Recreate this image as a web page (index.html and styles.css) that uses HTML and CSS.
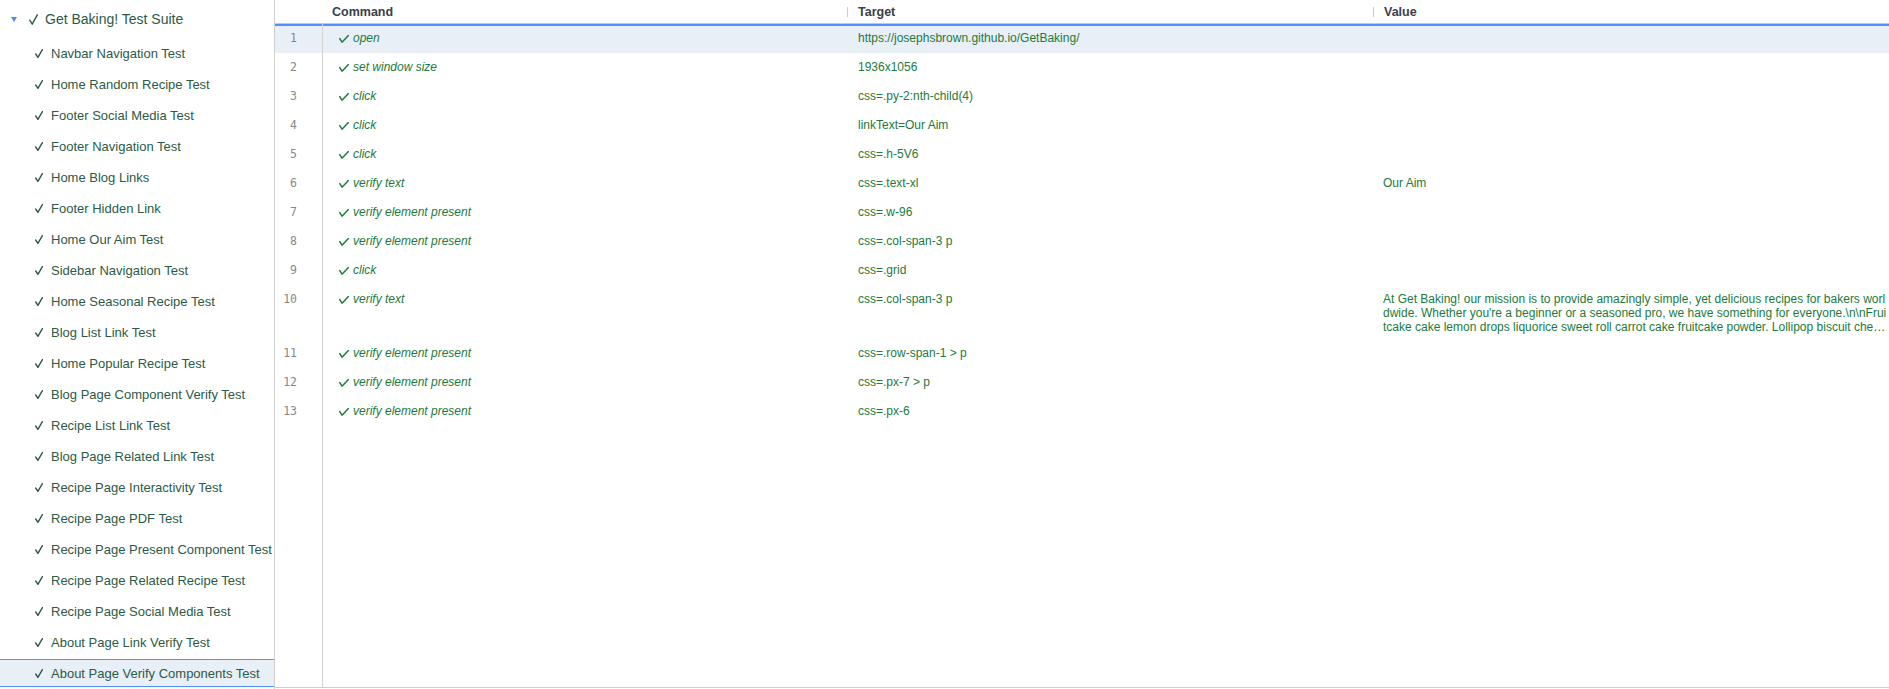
FILE: index.html
```html
<!DOCTYPE html>
<html lang="en">
<head>
<meta charset="utf-8">
<title>Get Baking! Test Suite</title>
<link rel="stylesheet" href="styles.css">
</head>
<body>
<div class="app">
  <aside class="sidebar">
    <div class="suite">
      <span class="caret"></span>
      <svg class="chk chk-suite" viewBox="0 0 9 11" width="9" height="11"><path d="M0.8 6.2 L3.2 10.2 L8.3 0.8"/></svg>
      <span>Get Baking! Test Suite</span>
    </div>
    <ul class="tests">
      <li class="test"><svg class="chk" viewBox="0 0 8 9" width="8" height="9"><path d="M0.7 5 L2.9 8.4 L7.4 0.6"/></svg>Navbar Navigation Test</li>
      <li class="test"><svg class="chk" viewBox="0 0 8 9" width="8" height="9"><path d="M0.7 5 L2.9 8.4 L7.4 0.6"/></svg>Home Random Recipe Test</li>
      <li class="test"><svg class="chk" viewBox="0 0 8 9" width="8" height="9"><path d="M0.7 5 L2.9 8.4 L7.4 0.6"/></svg>Footer Social Media Test</li>
      <li class="test"><svg class="chk" viewBox="0 0 8 9" width="8" height="9"><path d="M0.7 5 L2.9 8.4 L7.4 0.6"/></svg>Footer Navigation Test</li>
      <li class="test"><svg class="chk" viewBox="0 0 8 9" width="8" height="9"><path d="M0.7 5 L2.9 8.4 L7.4 0.6"/></svg>Home Blog Links</li>
      <li class="test"><svg class="chk" viewBox="0 0 8 9" width="8" height="9"><path d="M0.7 5 L2.9 8.4 L7.4 0.6"/></svg>Footer Hidden Link</li>
      <li class="test"><svg class="chk" viewBox="0 0 8 9" width="8" height="9"><path d="M0.7 5 L2.9 8.4 L7.4 0.6"/></svg>Home Our Aim Test</li>
      <li class="test"><svg class="chk" viewBox="0 0 8 9" width="8" height="9"><path d="M0.7 5 L2.9 8.4 L7.4 0.6"/></svg>Sidebar Navigation Test</li>
      <li class="test"><svg class="chk" viewBox="0 0 8 9" width="8" height="9"><path d="M0.7 5 L2.9 8.4 L7.4 0.6"/></svg>Home Seasonal Recipe Test</li>
      <li class="test"><svg class="chk" viewBox="0 0 8 9" width="8" height="9"><path d="M0.7 5 L2.9 8.4 L7.4 0.6"/></svg>Blog List Link Test</li>
      <li class="test"><svg class="chk" viewBox="0 0 8 9" width="8" height="9"><path d="M0.7 5 L2.9 8.4 L7.4 0.6"/></svg>Home Popular Recipe Test</li>
      <li class="test"><svg class="chk" viewBox="0 0 8 9" width="8" height="9"><path d="M0.7 5 L2.9 8.4 L7.4 0.6"/></svg>Blog Page Component Verify Test</li>
      <li class="test"><svg class="chk" viewBox="0 0 8 9" width="8" height="9"><path d="M0.7 5 L2.9 8.4 L7.4 0.6"/></svg>Recipe List Link Test</li>
      <li class="test"><svg class="chk" viewBox="0 0 8 9" width="8" height="9"><path d="M0.7 5 L2.9 8.4 L7.4 0.6"/></svg>Blog Page Related Link Test</li>
      <li class="test"><svg class="chk" viewBox="0 0 8 9" width="8" height="9"><path d="M0.7 5 L2.9 8.4 L7.4 0.6"/></svg>Recipe Page Interactivity Test</li>
      <li class="test"><svg class="chk" viewBox="0 0 8 9" width="8" height="9"><path d="M0.7 5 L2.9 8.4 L7.4 0.6"/></svg>Recipe Page PDF Test</li>
      <li class="test"><svg class="chk" viewBox="0 0 8 9" width="8" height="9"><path d="M0.7 5 L2.9 8.4 L7.4 0.6"/></svg>Recipe Page Present Component Test</li>
      <li class="test"><svg class="chk" viewBox="0 0 8 9" width="8" height="9"><path d="M0.7 5 L2.9 8.4 L7.4 0.6"/></svg>Recipe Page Related Recipe Test</li>
      <li class="test"><svg class="chk" viewBox="0 0 8 9" width="8" height="9"><path d="M0.7 5 L2.9 8.4 L7.4 0.6"/></svg>Recipe Page Social Media Test</li>
      <li class="test"><svg class="chk" viewBox="0 0 8 9" width="8" height="9"><path d="M0.7 5 L2.9 8.4 L7.4 0.6"/></svg>About Page Link Verify Test</li>
      <li class="test selected"><svg class="chk" viewBox="0 0 8 9" width="8" height="9"><path d="M0.7 5 L2.9 8.4 L7.4 0.6"/></svg>About Page Verify Components Test</li>
    </ul>
  </aside>

  <main class="editor">
    <div class="thead">
      <div class="th th-num"></div>
      <div class="th th-cmd">Command</div>
      <div class="th"><span class="sep"></span>Target</div>
      <div class="th"><span class="sep"></span>Value</div>
    </div>
    <div class="tbody">
      <div class="row current">
        <div class="num">1</div>
        <div class="cmd"><svg class="cchk" viewBox="0 0 10 8" width="10" height="8"><path d="M0.8 3.6 L3 7.2 L9.4 0.6"/></svg>open</div>
        <div class="target">https://josephsbrown.github.io/GetBaking/</div>
        <div class="value"></div>
      </div>
      <div class="row">
        <div class="num">2</div>
        <div class="cmd"><svg class="cchk" viewBox="0 0 10 8" width="10" height="8"><path d="M0.8 3.6 L3 7.2 L9.4 0.6"/></svg>set window size</div>
        <div class="target">1936x1056</div>
        <div class="value"></div>
      </div>
      <div class="row">
        <div class="num">3</div>
        <div class="cmd"><svg class="cchk" viewBox="0 0 10 8" width="10" height="8"><path d="M0.8 3.6 L3 7.2 L9.4 0.6"/></svg>click</div>
        <div class="target">css=.py-2:nth-child(4)</div>
        <div class="value"></div>
      </div>
      <div class="row">
        <div class="num">4</div>
        <div class="cmd"><svg class="cchk" viewBox="0 0 10 8" width="10" height="8"><path d="M0.8 3.6 L3 7.2 L9.4 0.6"/></svg>click</div>
        <div class="target">linkText=Our Aim</div>
        <div class="value"></div>
      </div>
      <div class="row">
        <div class="num">5</div>
        <div class="cmd"><svg class="cchk" viewBox="0 0 10 8" width="10" height="8"><path d="M0.8 3.6 L3 7.2 L9.4 0.6"/></svg>click</div>
        <div class="target">css=.h-5V6</div>
        <div class="value"></div>
      </div>
      <div class="row">
        <div class="num">6</div>
        <div class="cmd"><svg class="cchk" viewBox="0 0 10 8" width="10" height="8"><path d="M0.8 3.6 L3 7.2 L9.4 0.6"/></svg>verify text</div>
        <div class="target">css=.text-xl</div>
        <div class="value">Our Aim</div>
      </div>
      <div class="row">
        <div class="num">7</div>
        <div class="cmd"><svg class="cchk" viewBox="0 0 10 8" width="10" height="8"><path d="M0.8 3.6 L3 7.2 L9.4 0.6"/></svg>verify element present</div>
        <div class="target">css=.w-96</div>
        <div class="value"></div>
      </div>
      <div class="row">
        <div class="num">8</div>
        <div class="cmd"><svg class="cchk" viewBox="0 0 10 8" width="10" height="8"><path d="M0.8 3.6 L3 7.2 L9.4 0.6"/></svg>verify element present</div>
        <div class="target">css=.col-span-3 p</div>
        <div class="value"></div>
      </div>
      <div class="row">
        <div class="num">9</div>
        <div class="cmd"><svg class="cchk" viewBox="0 0 10 8" width="10" height="8"><path d="M0.8 3.6 L3 7.2 L9.4 0.6"/></svg>click</div>
        <div class="target">css=.grid</div>
        <div class="value"></div>
      </div>
      <div class="row">
        <div class="num">10</div>
        <div class="cmd"><svg class="cchk" viewBox="0 0 10 8" width="10" height="8"><path d="M0.8 3.6 L3 7.2 L9.4 0.6"/></svg>verify text</div>
        <div class="target">css=.col-span-3 p</div>
        <div class="value long">At Get Baking! our mission is to provide amazingly simple, yet delicious recipes for bakers worldwide. Whether you're a beginner or a seasoned pro, we have something for everyone.\n\nFruitcake cake lemon drops liquorice sweet roll carrot cake fruitcake powder. Lollipop biscuit che…</div>
      </div>
      <div class="row">
        <div class="num">11</div>
        <div class="cmd"><svg class="cchk" viewBox="0 0 10 8" width="10" height="8"><path d="M0.8 3.6 L3 7.2 L9.4 0.6"/></svg>verify element present</div>
        <div class="target">css=.row-span-1 &gt; p</div>
        <div class="value"></div>
      </div>
      <div class="row">
        <div class="num">12</div>
        <div class="cmd"><svg class="cchk" viewBox="0 0 10 8" width="10" height="8"><path d="M0.8 3.6 L3 7.2 L9.4 0.6"/></svg>verify element present</div>
        <div class="target">css=.px-7 &gt; p</div>
        <div class="value"></div>
      </div>
      <div class="row">
        <div class="num">13</div>
        <div class="cmd"><svg class="cchk" viewBox="0 0 10 8" width="10" height="8"><path d="M0.8 3.6 L3 7.2 L9.4 0.6"/></svg>verify element present</div>
        <div class="target">css=.px-6</div>
        <div class="value"></div>
      </div>
      <div class="row filler">
        <div class="num"></div>
        <div></div>
        <div></div>
        <div></div>
      </div>
    </div>
  </main>
</div>
</body>
</html>
```

FILE: styles.css
```css
* {
  box-sizing: border-box;
}

html, body {
  margin: 0;
  padding: 0;
  background: #ffffff;
}

body {
  font-family: "Liberation Sans", Arial, sans-serif;
  font-size: 12px;
  color: #333;
}

.app {
  display: flex;
  height: 689px;
  overflow: hidden;
}

/* ---------- sidebar ---------- */
.sidebar {
  width: 275px;
  flex: none;
  border-right: 1px solid #cfcfcf;
  padding-top: 5px;
  overflow: hidden;
}

.suite {
  display: flex;
  align-items: center;
  height: 28px;
  padding-left: 11px;
  font-size: 14px;
  color: #2c5a46;
  white-space: nowrap;
}

.caret {
  width: 0;
  height: 0;
  border-left: 3.5px solid transparent;
  border-right: 3.5px solid transparent;
  border-top: 5px solid #4a90e2;
  margin-right: 12px;
}

.chk {
  flex: none;
  fill: none;
  stroke: #2c5a46;
  stroke-width: 1.4;
  stroke-linecap: round;
  stroke-linejoin: round;
  margin-right: 8px;
}

.chk-suite {
  margin-right: 7px;
}

.tests {
  list-style: none;
  margin: 6px 0 0;
  padding: 0;
  display: flex;
  flex-direction: column;
  gap: 3px;
}

.test {
  display: flex;
  align-items: center;
  height: 28px;
  padding-left: 35px;
  font-size: 13px;
  color: #2c5a46;
  white-space: nowrap;
}

.test.selected {
  background: #e8eff7;
  box-shadow: inset 0 1px 0 #4d90fe, inset 0 -1px 0 #4d90fe;
}

/* ---------- editor table ---------- */
.editor {
  flex: 1;
  min-width: 0;
  height: 688px;
  border-bottom: 1px solid #cfcfcf;
  display: flex;
  flex-direction: column;
}

.thead,
.row {
  display: grid;
  grid-template-columns: 48px 524px 526px 1fr;
}

.thead {
  height: 24px;
  border-bottom: 1px solid #c8c8c8;
  flex: none;
}

.th {
  display: flex;
  align-items: center;
  font-size: 12.5px;
  font-weight: bold;
  color: #3b404c;
  white-space: nowrap;
}

.th-cmd {
  padding-left: 9px;
}

.sep {
  width: 1px;
  height: 10px;
  background: #cccccc;
  margin-right: 10px;
}

.tbody {
  flex: 1;
  display: flex;
  flex-direction: column;
}

.row {
  min-height: 29px;
  flex: none;
  color: #1c7a3c;
  line-height: 14px;
}

.row > div {
  padding: 7px 0 5px;
}

.row.current {
  background: #e8eff7;
  box-shadow: inset 0 2px 0 #4d90fe;
}

.row.filler {
  flex: 1;
}

.num {
  border-right: 1px solid #d3d3d3;
  text-align: right;
  padding-right: 25px !important;
  font-family: "DejaVu Sans Mono", "Liberation Mono", monospace;
  font-size: 11.5px;
  color: #888888;
}

.cmd {
  padding-left: 16px !important;
  font-style: italic;
  white-space: nowrap;
}

.cchk {
  fill: none;
  stroke: #1c7a3c;
  stroke-width: 1.5;
  stroke-linecap: round;
  stroke-linejoin: round;
  margin-right: 4px;
  vertical-align: -1px;
}

.target {
  padding-left: 11px !important;
  white-space: nowrap;
}

.value {
  padding-left: 10px !important;
  padding-right: 0 !important;
}

.value.long {
  word-break: break-all;
}
```
